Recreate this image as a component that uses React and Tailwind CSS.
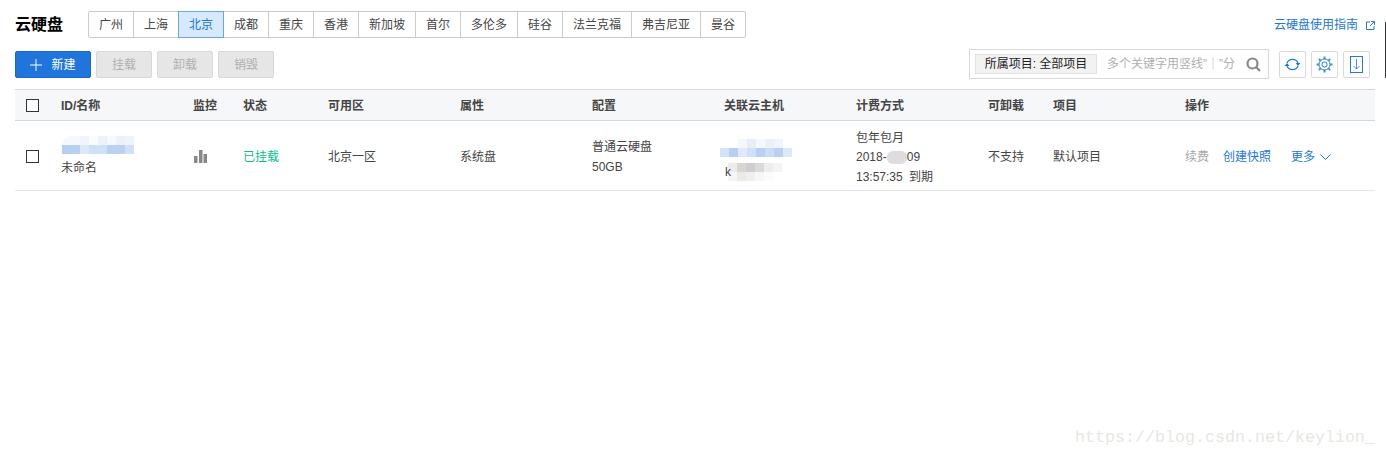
import React from "react";

const regions = [
  ["广州", "w-[44px]"], ["上海", "w-[45px]"], ["北京", "w-[46px]"], ["成都", "w-[45px]"], ["重庆", "w-[45px]"],
  ["香港", "w-[45px]"], ["新加坡", "w-[57px]"], ["首尔", "w-[45px]"], ["多伦多", "w-[57px]"], ["硅谷", "w-[45px]"],
  ["法兰克福", "w-[69px]"], ["弗吉尼亚", "w-[69px]"], ["曼谷", "w-[45px]"],
];

const heads = ["ID/名称", "监控", "状态", "可用区", "属性", "配置", "关联云主机", "计费方式", "可卸载", "项目", "操作"];
const grid = "grid grid-cols-[46px_132px_50px_85px_132px_132px_132px_132px_132px_65px_132px_1fr]";
const teeth = [0, 45, 90, 135, 180, 225, 270, 315];

function Mosaic({ rows, cell, h, className = "" }) {
  return (
    <div className={`flex flex-col overflow-hidden ${className}`}>
      {rows.map((r, i) => (
        <div key={i} className="flex">
          {r.map((c, j) => (
            <div key={j} style={{ backgroundColor: c, width: cell, height: h }} />
          ))}
        </div>
      ))}
    </div>
  );
}

function Checkbox() {
  return <div className="w-[13px] h-[13px] border border-[#333] bg-white" />;
}

export default function App() {
  return (
    <div className="relative h-[457px] w-[1386px] overflow-hidden bg-white pl-[15px] pr-[11px] text-xs text-[#444] font-['Liberation_Sans','Noto_Sans_CJK_SC',sans-serif]">
      <div className="absolute right-0 top-[22px] h-[56px] w-[1px] bg-[#333]" />
      <div className="flex h-[51px] items-start justify-between">
        <div className="flex items-center pt-[11px]">
          <h1 className="w-[73px] text-[16px] font-bold text-black">云硬盘</h1>
          <div className="flex h-[27px] rounded-[2px] border border-[#ccc]">
            {regions.map(([name, w], i) => (
              <div
                key={name}
                className={
                  name === "北京"
                    ? `${w} relative z-10 -my-px -mr-px flex items-center justify-center border border-[#6aa5e4] bg-[#d7e9fc] text-[#2277da]`
                    : `${w} flex items-center justify-center ${i === 0 ? "" : "border-l border-[#ccc]"}`
                }
              >
                {name}
              </div>
            ))}
          </div>
        </div>
        <a className="mt-[17px] flex items-center gap-[8px] text-[#2277da]">
          云硬盘使用指南
          <svg width="9" height="9" viewBox="0 0 9 9" fill="none" stroke="#2277da" strokeWidth="1">
            <path d="M4 1H.5v7.5H8V5M5 .5h3.5V4M8.5.5 4 5" />
          </svg>
        </a>
      </div>

      <div className="flex h-[38px] items-start justify-between">
        <div className="flex gap-[5px]">
          <button className="flex h-[27px] w-[76px] items-center justify-center gap-[9px] rounded-[2px] border border-[#1a6ac4] bg-[#1f75dc] text-white">
            <svg width="12" height="12" viewBox="0 0 12 12" stroke="#fff" strokeWidth="1"><path d="M6 0v12M0 6h12" /></svg>
            新建
          </button>
          {["挂载", "卸载", "销毁"].map((t) => (
            <button key={t} className="h-[27px] w-[56px] rounded-[2px] border border-[#d9d9d9] bg-[#e6e6e6] text-[#b0b0b0]">{t}</button>
          ))}
        </div>
        <div className="flex items-start">
          <div className="-mt-[2px] flex h-[30px] w-[300px] items-center border border-[#d9d9d9] pl-[5px]">
            <div className="flex h-[20px] w-[122px] items-center justify-center border border-[#e2e2e2] bg-[#f2f2f2] text-[#222]">所属项目: 全部项目</div>
            <div className="ml-[10px] w-[128px] overflow-hidden whitespace-nowrap text-[#b0b0b0]">多个关键字用竖线”｜”分</div>
            <svg className="ml-[11px]" width="15" height="15" viewBox="0 0 15 15" fill="none" stroke="#888" strokeWidth="2.2"><circle cx="6.5" cy="6.5" r="5" /><path d="m10 10 4 4" /></svg>
          </div>
          <div className="ml-[10px] flex gap-[5px] pr-[5px]">
            <button className="flex h-[27px] w-[27px] items-center justify-center rounded-[2px] border border-[#d9d9d9]">
              <svg width="17" height="15" viewBox="0 0 17 15" fill="none" stroke="#2277da" strokeWidth="1.2">
                <path d="M3 6A6 6 0 0 1 14 6M14 9A6 6 0 0 1 3 9" />
                <path d="M11.5 6h5L14 9zM.5 9h5L3 6z" fill="#2277da" stroke="none" />
              </svg>
            </button>
            <button className="flex h-[27px] w-[27px] items-center justify-center rounded-[2px] border border-[#d9d9d9]">
              <svg width="17" height="17" viewBox="0 0 17 17" fill="none" stroke="#2277da">
                {teeth.map((a) => (
                  <rect key={a} x="7.5" y="0.5" width="2" height="2.5" fill="#4a90e2" stroke="none" transform={`rotate(${a} 8.5 8.5)`} />
                ))}
                <circle cx="8.5" cy="8.5" r="5.5" strokeWidth="1" />
                <circle cx="8.5" cy="8.5" r="2.6" strokeWidth="1" />
              </svg>
            </button>
            <button className="flex h-[27px] w-[27px] items-center justify-center rounded-[2px] border border-[#d9d9d9]">
              <svg width="13" height="17" viewBox="0 0 13 17" fill="none" stroke="#2277da">
                <rect x=".5" y=".5" width="12" height="16" />
                <path d="M6.5 3v10M3.5 10l3 3 3-3" strokeWidth="0.8" />
              </svg>
            </button>
          </div>
        </div>
      </div>

      <div className={`${grid} h-[32px] items-center border-y border-y-[#d5d6de] bg-[#f6f7f9] font-bold`}>
        <div className="pl-[11px]"><Checkbox /></div>
        {heads.map((h) => <div key={h} className="pt-[2px]">{h}</div>)}
      </div>

      <div className={`${grid} h-[70px] items-center border-b border-[#e6e7ee] pt-[2px]`}>
        <div className="pl-[11px]"><Checkbox /></div>
        <div>
          <div className="mb-[6px] mt-[-2px] ml-[1px]">
            <Mosaic
              className="rounded-tl-[8px]"
              cell="9px"
              h="9px"
              rows={[
                ["#f7f9fe", "#f5f8fe", "#f0f4fc", "#f9fbff", "#ebf2fc", "#f6f9fe", "#eaf1fc", "#eef4fd"],
                ["#b4cff0", "#b8d1f2", "#dce7f9", "#cfe0f7", "#cfe0f7", "#b9d2f1", "#b9d2f1", "#cfe0f7"],
              ]}
            />
          </div>
          <div>未命名</div>
        </div>
        <div className="pl-[1px]">
          <svg width="13" height="13" viewBox="0 0 13 13" fill="#888"><path d="M0 6h3.5v7H0zM5 0h3.5v13H5zM9.5 4H13v9H9.5z" /></svg>
        </div>
        <div className="text-[#06c28d]">已挂载</div>
        <div>北京一区</div>
        <div>系统盘</div>
        <div className="leading-[20px]">普通云硬盘<br />50GB</div>
        <div className="-ml-[4px] pt-[7px]">
          <Mosaic
            cell="9px"
            h="9px"
            rows={[
              ["#ffffff", "#ffffff", "#f4f7fd", "#e6eefa", "#f6f8fd", "#eaf1fb", "#f0f4fc", "#ffffff"],
              ["#d5e3f7", "#b8d1f2", "#dfe9f9", "#cfe0f7", "#b8d1f2", "#c9dcf5", "#b8d1f2", "#dde8f8"],
            ]}
          />
          <div className="mt-[6px] ml-[5px] flex items-start">
            <span className="relative z-10 mr-[-3px] leading-[18px]">k</span>
            <Mosaic
              cell="9px"
              h="9px"
              rows={[
                ["#ecebe9", "#d8d6d5", "#cfcdd0", "#dadbd9", "#edeeec", "#f4f4f4"],
                ["#f6f6f4", "#ebeae7", "#f0efed", "#f6f6f6", "#fbfbfa", "#ffffff"],
              ]}
            />
          </div>
        </div>
        <div className="leading-[19px] pt-[2px]">
          <div>包年包月</div>
          <div className="flex items-center">2018-<span className="inline-block h-[13px] w-[20px] rounded-[6px] bg-[#dedcde]" />09</div>
          <div className="mt-[1px]">13:57:35 <span className="ml-[3px]">到期</span></div>
        </div>
        <div>不支持</div>
        <div>默认项目</div>
        <div className="flex items-center">
          <span className="text-[#aaa]">续费</span>
          <span className="ml-[14px] text-[#2277da]">创建快照</span>
          <span className="ml-[20px] text-[#2277da]">更多</span>
          <svg className="ml-[5px]" width="11" height="6" viewBox="0 0 11 6" fill="none" stroke="#2277da"><path d="m.5.5 5 5 5-5" /></svg>
        </div>
      </div>

      <div className="absolute bottom-[8px] left-[1075px] whitespace-nowrap font-['Liberation_Mono',monospace] text-[16.67px] text-[#e9e7e2]">https://blog.csdn.net/keylion_</div>
    </div>
  );
}
